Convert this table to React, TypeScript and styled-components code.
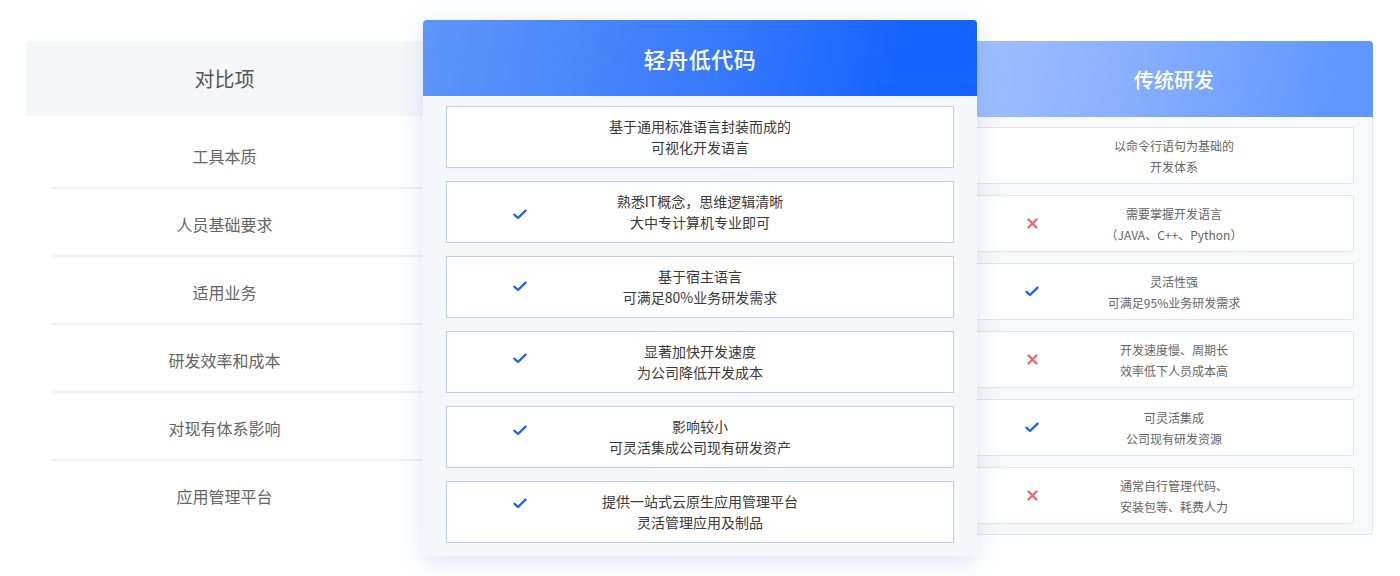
import React from "react";
import styled, { createGlobalStyle } from "styled-components";

const GlobalStyle = createGlobalStyle`
  body {
    margin: 0;
    background: #fff;
    font-family: "Noto Sans CJK SC", "Noto Sans", sans-serif;
    -webkit-font-smoothing: antialiased;
  }
`;

const Page = styled.div`
  display: flex;
  align-items: flex-start;
  padding: 20px 0 0 26px;
  width: 1400px;
  height: 576px;
  box-sizing: border-box;
`;

const LeftColumn = styled.div`
  width: 397px;
  margin-top: 21px;
`;

const LeftHeader = styled.div`
  height: 75px;
  margin-bottom: 5px;
  background: #f6f7f9;
  border-radius: 4px 0 0 0;
  display: flex;
  align-items: center;
  justify-content: center;
  font-size: 20px;
  color: #555;
`;

const LeftRow = styled.div<{ $last?: boolean }>`
  height: 68px;
  box-sizing: border-box;
  margin-left: 26px;
  padding: 4px 26px 0 0;
  border-bottom: 2px solid ${(p) => (p.$last ? "transparent" : "#f0f1f4")};
  display: flex;
  align-items: center;
  justify-content: center;
  font-size: 16px;
  color: #666;
`;

const FeatureCard = styled.div`
  position: relative;
  z-index: 2;
  width: 554px;
  background: #f5f7fa;
  border-radius: 4px;
  box-shadow: 0 6px 26px rgba(40, 90, 200, 0.16);
  padding-bottom: 13px;
`;

const FeatureHeader = styled.div`
  height: 76px;
  border-radius: 4px 4px 0 0;
  background: linear-gradient(100deg, #5e96f8 0%, #3a7bfb 50%, #1664ff 85%);
  display: flex;
  align-items: center;
  justify-content: center;
  font-size: 22px;
  font-weight: 500;
  color: #fff;
  letter-spacing: 0.5px;
`;

const FeatureList = styled.div`
  display: flex;
  flex-direction: column;
  gap: 13px;
  padding: 10px 23px 0;
`;

const FeatureCell = styled.div`
  height: 62px;
  box-sizing: border-box;
  background: #fff;
  border: 1px solid #b9d0fc;
  display: grid;
  grid-template-columns: 146px 1fr 146px;
  align-items: center;
`;

const FeatureText = styled.div`
  text-align: center;
  font-size: 14px;
  line-height: 21px;
  color: #3a3a3a;
`;

const IconSlot = styled.div<{ $shift?: number }>`
  display: flex;
  justify-content: center;
  align-items: center;
  transform: translateY(${(p) => p.$shift ?? 0}px);
`;

const ClassicCard = styled.div`
  position: relative;
  z-index: 1;
  width: 416px;
  margin-top: 21px;
  margin-left: -20px;
  border-radius: 4px;
  overflow: hidden;
`;

const ClassicHeader = styled.div`
  height: 76px;
  background: linear-gradient(100deg, #a3c2fd 0%, #86aefd 45%, #6097fd 90%);
  display: flex;
  align-items: center;
  justify-content: center;
  padding-left: 18px;
  font-size: 20px;
  font-weight: 500;
  color: #fff;
`;

const ClassicList = styled.div`
  display: flex;
  flex-direction: column;
  gap: 11px;
  padding: 10px 18px 10px;
  background: #f8f9fb;
  border: 1px solid #dfe8f8;
  border-top: none;
  border-radius: 0 0 4px 4px;
`;

const ClassicCell = styled.div`
  height: 57px;
  box-sizing: border-box;
  background: #fff;
  border: 1px solid #e4e6eb;
  display: grid;
  grid-template-columns: 110px 1fr 92px;
  align-items: center;
`;

const ClassicText = styled.div`
  text-align: center;
  font-size: 12px;
  line-height: 21px;
  color: #666;
  white-space: nowrap;
`;

const Check = () => (
  <svg width="14" height="11" viewBox="0 0 14 11">
    <path
      d="M1.5 5.8 L5 9 L12.5 1.6"
      fill="none"
      stroke="#1664ff"
      strokeWidth="2.3"
      strokeLinecap="round"
      strokeLinejoin="round"
    />
  </svg>
);

const Cross = () => (
  <svg width="11" height="11" viewBox="0 0 11 11">
    <path
      d="M1.5 1.5 L9.5 9.5 M9.5 1.5 L1.5 9.5"
      fill="none"
      stroke="#f56262"
      strokeWidth="2.2"
      strokeLinecap="round"
    />
  </svg>
);

type Mark = "check" | "cross" | null;

const items = [
  "工具本质",
  "人员基础要求",
  "适用业务",
  "研发效率和成本",
  "对现有体系影响",
  "应用管理平台",
];

const lowCode: { lines: string[]; mark: Mark; shift: number }[] = [
  { lines: ["基于通用标准语言封装而成的", "可视化开发语言"], mark: null, shift: 0 },
  { lines: ["熟悉IT概念，思维逻辑清晰", "大中专计算机专业即可"], mark: "check", shift: 2 },
  { lines: ["基于宿主语言", "可满足80%业务研发需求"], mark: "check", shift: -1 },
  { lines: ["显著加快开发速度", "为公司降低开发成本"], mark: "check", shift: -4 },
  { lines: ["影响较小", "可灵活集成公司现有研发资产"], mark: "check", shift: -7 },
  { lines: ["提供一站式云原生应用管理平台", "灵活管理应用及制品"], mark: "check", shift: -9 },
];

const classic: { lines: string[]; mark: Mark }[] = [
  { lines: ["以命令行语句为基础的", "开发体系"], mark: null },
  { lines: ["需要掌握开发语言", "（JAVA、C++、Python）"], mark: "cross" },
  { lines: ["灵活性强", "可满足95%业务研发需求"], mark: "check" },
  { lines: ["开发速度慢、周期长", "效率低下人员成本高"], mark: "cross" },
  { lines: ["可灵活集成", "公司现有研发资源"], mark: "check" },
  { lines: ["通常自行管理代码、", "安装包等、耗费人力"], mark: "cross" },
];

const renderMark = (mark: Mark) =>
  mark === "check" ? <Check /> : mark === "cross" ? <Cross /> : null;

export default function App() {
  return (
    <>
      <GlobalStyle />
      <Page>
        <LeftColumn>
          <LeftHeader>对比项</LeftHeader>
          {items.map((item, i) => (
            <LeftRow key={item} $last={i === items.length - 1}>
              {item}
            </LeftRow>
          ))}
        </LeftColumn>

        <FeatureCard>
          <FeatureHeader>轻舟低代码</FeatureHeader>
          <FeatureList>
            {lowCode.map((row) => (
              <FeatureCell key={row.lines[0]}>
                <IconSlot $shift={row.shift}>{renderMark(row.mark)}</IconSlot>
                <FeatureText>
                  {row.lines.map((l) => (
                    <div key={l}>{l}</div>
                  ))}
                </FeatureText>
                <span />
              </FeatureCell>
            ))}
          </FeatureList>
        </FeatureCard>

        <ClassicCard>
          <ClassicHeader>传统研发</ClassicHeader>
          <ClassicList>
            {classic.map((row) => (
              <ClassicCell key={row.lines[0]}>
                <IconSlot>{renderMark(row.mark)}</IconSlot>
                <ClassicText>
                  {row.lines.map((l) => (
                    <div key={l}>{l}</div>
                  ))}
                </ClassicText>
                <span />
              </ClassicCell>
            ))}
          </ClassicList>
        </ClassicCard>
      </Page>
    </>
  );
}
